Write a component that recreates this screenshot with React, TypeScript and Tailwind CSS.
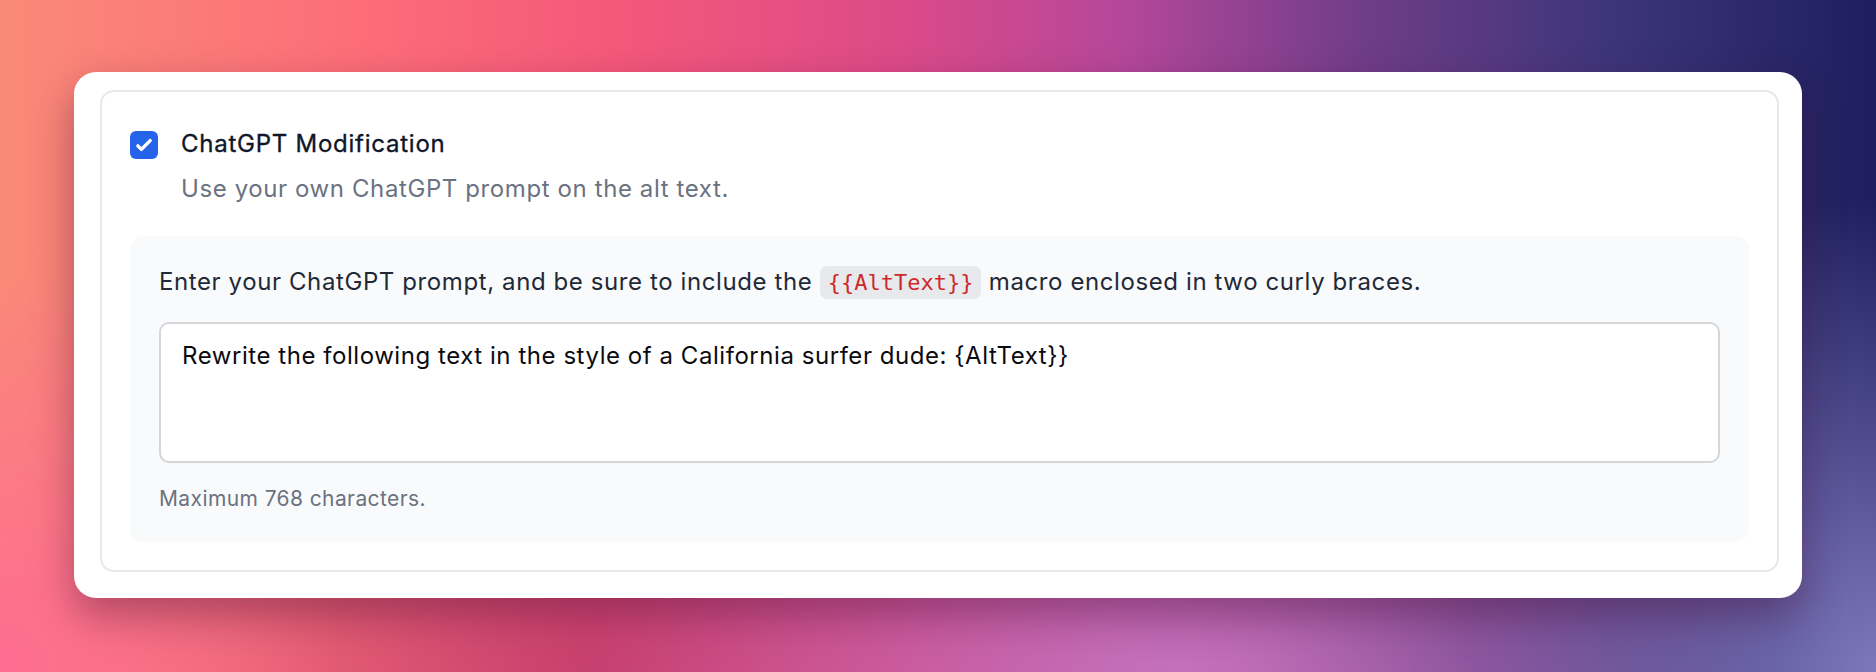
import React, { useState } from "react";

const bg =
  "bg-[radial-gradient(ellipse_32%_45%_at_63%_100%,rgba(200,118,190,0.9),transparent),radial-gradient(ellipse_22%_70%_at_100%_100%,rgba(130,124,192,0.95),transparent),radial-gradient(ellipse_18%_60%_at_0%_100%,rgba(255,106,146,0.95),transparent),radial-gradient(ellipse_30%_40%_at_32%_100%,rgba(160,40,100,0.55),transparent),linear-gradient(90deg,#f98a78_0%,#fd6f78_18%,#f4587a_33%,#dc4a88_48%,#b4479a_60%,#6e3d88_73%,#3c3579_86%,#1e1f5e_100%)]";

export default function App() {
  const [enabled, setEnabled] = useState(true);
  const [prompt, setPrompt] = useState(
    "Rewrite the following text in the style of a California surfer dude: {AltText}}"
  );

  return (
    <div className={`h-[672px] w-full px-[74px] pt-[72px] ${bg} font-['Inter',sans-serif] tracking-[0.6px]`}>
      <div className="rounded-[22px] bg-white pt-[18px] pr-[23px] pb-[26px] pl-[26px] shadow-[0_18px_40px_rgba(70,10,50,0.4)]">
        <div className="rounded-[14px] border-2 border-[#e7e8eb] p-[28px]">
          <div className="flex items-start">
            <button
              type="button"
              onClick={() => setEnabled((v) => !v)}
              className={`mt-[11px] flex h-[28px] w-[28px] shrink-0 items-center justify-center rounded-[6px] ${
                enabled ? "bg-[#2563eb]" : "border-2 border-[#d1d5db] bg-white"
              }`}
            >
              {enabled && (
                <svg viewBox="0 0 16 16" className="h-[28px] w-[28px]" fill="white">
                  <path d="M12.207 4.793a1 1 0 010 1.414l-5 5a1 1 0 01-1.414 0l-2-2a1 1 0 011.414-1.414L6.5 9.086l4.293-4.293a1 1 0 011.414 0z" />
                </svg>
              )}
            </button>
            <div className="ml-[23px] pt-[6px]">
              <div className="text-[24px] leading-[35px] font-normal tracking-[0.75px] text-[#0f172a] [-webkit-text-stroke:0.35px_#0f172a]">
                ChatGPT Modification
              </div>
              <p className="mt-[10px] text-[24px] leading-[35px] text-[#6b7280]">
                Use your own ChatGPT prompt on the alt text.
              </p>
            </div>
          </div>

          <div className="mt-[30px] rounded-[14px] bg-[#f9fafb] px-[29px] pt-[28px] pb-[27px]">
            <p className="text-[24px] leading-[35px] text-[#1f2937]">
              Enter your ChatGPT prompt, and be sure to include the{" "}
              <code className="rounded-[7px] bg-[#e8e9ec] px-[8px] py-[4px] font-['DejaVu_Sans_Mono',monospace] text-[22px] tracking-normal text-[#cc2a2a]">
                {"{{AltText}}"}
              </code>{" "}
              macro enclosed in two curly braces.
            </p>
            <textarea
              value={prompt}
              onChange={(e) => setPrompt(e.target.value)}
              className="mt-[22px] block h-[141px] w-full resize-none rounded-[10px] border-2 border-[#d4d6da] bg-white px-[21px] py-[14px] text-[24px] leading-[35px] tracking-[0.55px] text-[#0b0b0f] outline-none"
            />
            <p className="mt-[19px] text-[21px] leading-[33px] tracking-[0.4px] text-[#6b7280]">Maximum 768 characters.</p>
          </div>
        </div>
      </div>
    </div>
  );
}
